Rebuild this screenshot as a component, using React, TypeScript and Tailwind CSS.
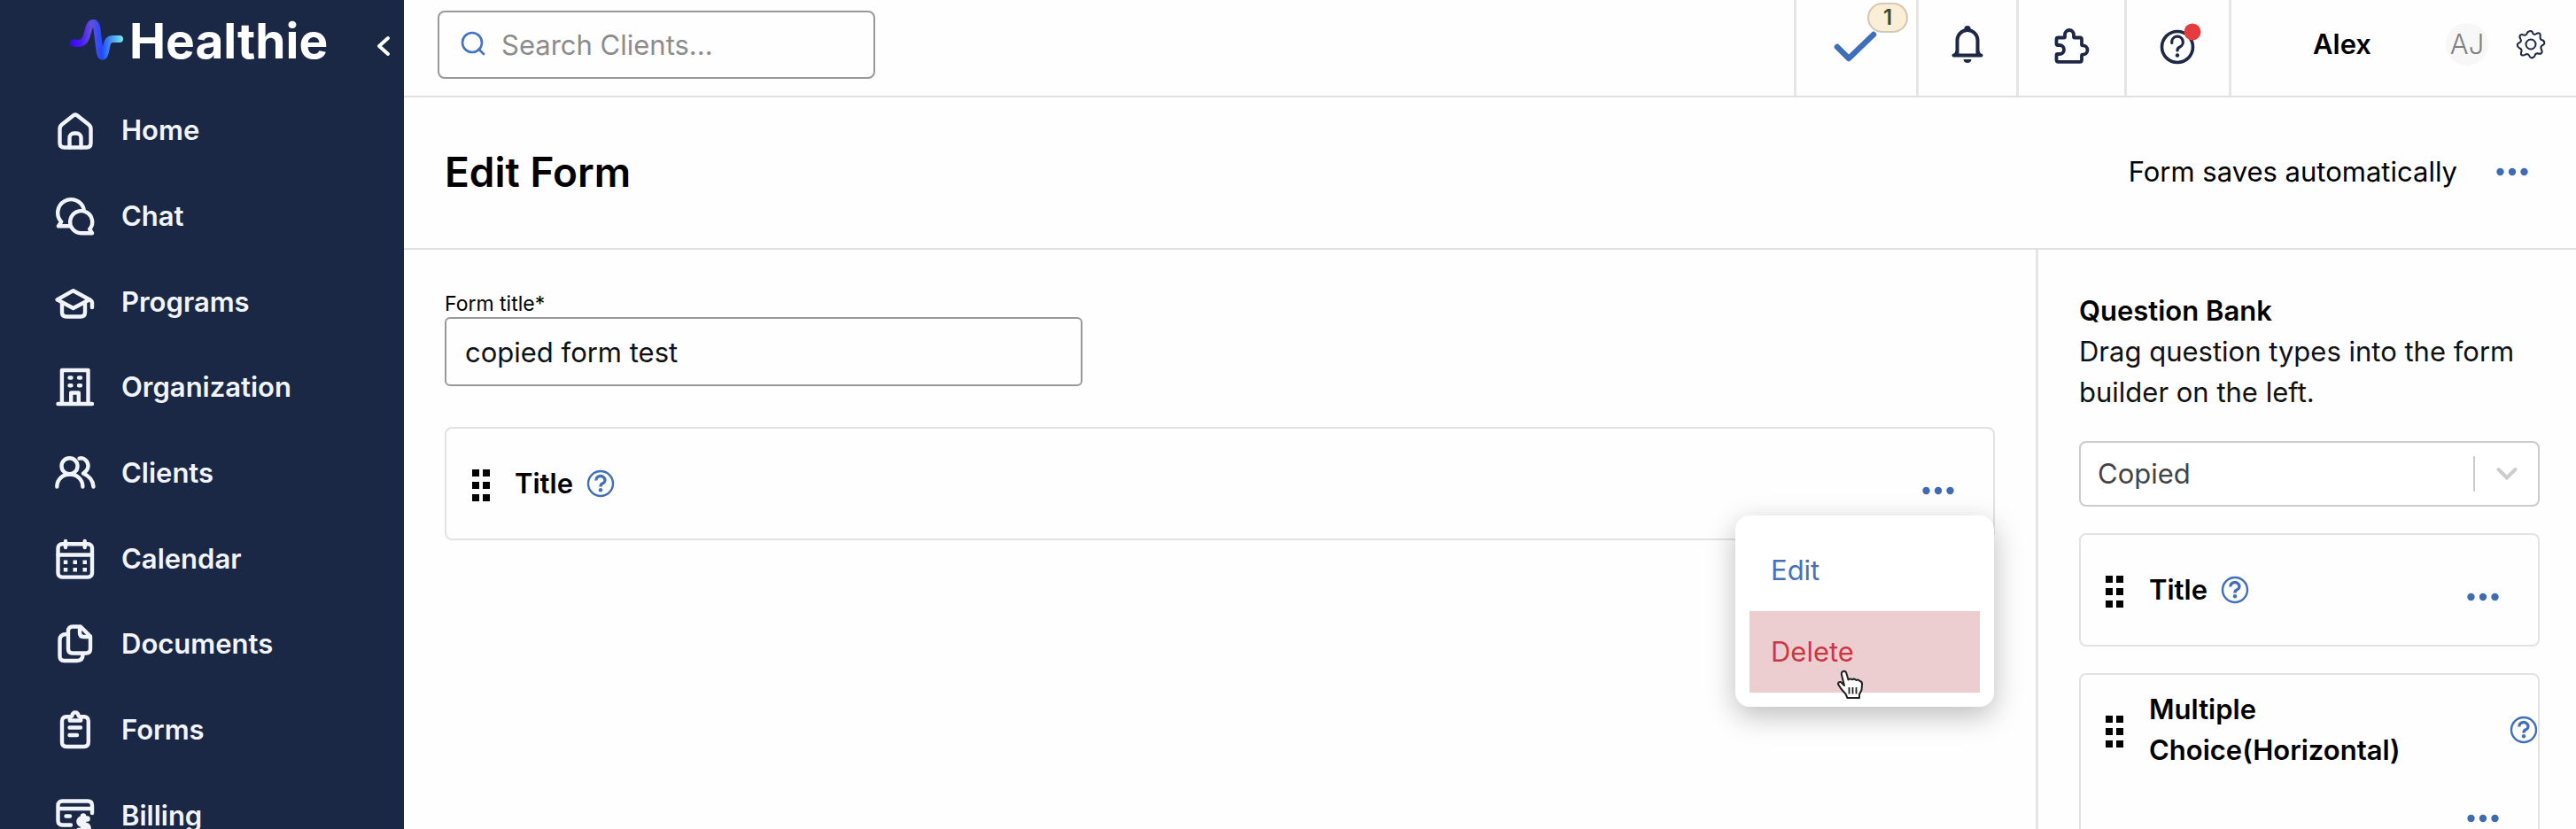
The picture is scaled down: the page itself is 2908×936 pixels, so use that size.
import type { ReactNode } from "react";

type NavItem = {
  label: string;
  icon: ReactNode;
};

const navItems: NavItem[] = [
  {
    label: "Home",
    icon: (
      <>
        <path d="M23 7.2 Q25 5.6 27 7.2 L40 17.5 Q42.5 19.5 42.5 22.5 V38.5 Q42.5 43.5 37.5 43.5 H12.5 Q7.5 43.5 7.5 38.5 V22.5 Q7.5 19.5 10 17.5 Z" />
        <path d="M18.5 43.5 V32.5 a5 5 0 0 1 5 -5 h3 a5 5 0 0 1 5 5 V43.5" />
      </>
    ),
  },
  {
    label: "Chat",
    icon: (
      <>
        <path d="M34.6 16 A15 15 0 1 0 9.2 30.4 L6 35.3 H19" />
        <path d="M41.2 38.8 A12.5 12.5 0 1 0 31.7 43.2 H44 Z" />
      </>
    ),
  },
  {
    label: "Programs",
    icon: (
      <>
        <path d="M22.7 11.2 L41 21.3 L22.7 31 L4.5 21.3 Z" />
        <path d="M41 21.3 Q44 22.8 44 25 V30" />
        <path d="M10 25.5 V35.5 q0 5 5 5 h16 q5 0 5 -5 V25.5" />
      </>
    ),
  },
  {
    label: "Organization",
    icon: (
      <>
        <path d="M9.9 43 V5 H39.5 V43 M5.5 43 H44 M20.2 43 V30.5 H28.8 V43" />
        <path d="M18.5 13.5 h2 M29 13.5 h2 M18.5 22.2 h2 M29 22.2 h2" />
      </>
    ),
  },
  {
    label: "Clients",
    icon: (
      <>
        <circle cx="18.5" cy="16.2" r="9" />
        <path d="M4.3 39.5 C4.3 31 11 25.5 18.8 25.5 S33.4 31 33.4 39.5" />
        <path d="M29.5 7.6 C35 6 39.5 11 39.5 16 C39.5 20 37 22.5 34 24.5 C41 27.5 45 33 45.5 39.5" />
      </>
    ),
  },
  {
    label: "Calendar",
    icon: (
      <>
        <rect x="5.5" y="7.3" width="38.5" height="37.3" rx="4.5" />
        <path d="M5.5 19.5 H44 M14 4 V11 M35.7 4 V11" />
        <path
          d="M14 27.8 h.1 M24.7 27.8 h.1 M35.7 27.8 h.1 M14 36.3 h.1 M24.7 36.3 h.1 M35.7 36.3 h.1"
          strokeLinecap="square"
        />
      </>
    ),
  },
  {
    label: "Documents",
    icon: (
      <>
        <path d="M31 4.5 H22 q-5 0 -5 5 V29.5 q0 5 5 5 H37 q5 0 5 -5 V15.5 Z" />
        <path d="M30 6 V11.5 q0 4.5 4.5 4.5 H41" />
        <path d="M15.5 13 Q7.5 13 7.5 19.5 V38 q0 5 5 5 H27 q6.5 0 6.5 -7" />
      </>
    ),
  },
  {
    label: "Forms",
    icon: (
      <>
        <path d="M18 9.3 H15 q-5 0 -5 5 V38 q0 5 5 5 H34.8 q5 0 5 -5 V14.3 q0 -5 -5 -5 H32" />
        <path d="M18.8 13.5 V11 q0 -2 2.4 -2.4 Q22 4.4 25 4.4 T28.8 8.6 q2.4 .4 2.4 2.4 V13.5 Z" />
        <path d="M18.5 21.5 H31 M18.5 30 H27" />
      </>
    ),
  },
  {
    label: "Billing",
    icon: (
      <>
        <path d="M20 34.5 H10.5 q-5 0 -5 -5 V12.5 q0 -5 5 -5 H39 q5 0 5 5 V21 M5.5 16 H44 M14.5 24.5 H19" />
        <path
          d="M38.5 27.5 H33 a3 3 0 0 0 -1 6 l5 1.5 a3 3 0 0 1 -1 6 H29 M34 24.5 V45"
          strokeWidth="6.5"
        />
      </>
    ),
  },
];

function Logo() {
  return (
    <a href="#" className="flex items-center gap-1.5 text-white">
      <svg width="62" height="50" viewBox="78 22 62 50" fill="none" aria-hidden="true">
        <defs>
          <linearGradient id="pulse" x1="80" y1="0" x2="138" y2="0" gradientUnits="userSpaceOnUse">
            <stop offset="0" stopColor="#3a06f2" />
            <stop offset="0.2" stopColor="#4a1cf0" />
            <stop offset="0.4" stopColor="#6450dc" />
            <stop offset="0.6" stopColor="#1f49ff" />
            <stop offset="0.75" stopColor="#3f86f0" />
            <stop offset="1" stopColor="#78e6e8" />
          </linearGradient>
        </defs>
        <path
          d="M83 49.5 C96 52 97 45 100 34 C102 25 108 24 109.5 34 L112.5 58 C113.5 67 118 67 119.5 57 C121 48 122 45 128 45 H135"
          stroke="url(#pulse)"
          strokeWidth="8"
          strokeLinecap="round"
          strokeLinejoin="round"
        />
      </svg>
      <span className="text-[55px] leading-[60px] font-bold">Healthie</span>
    </a>
  );
}

function Sidebar() {
  return (
    <aside className="w-[456px] shrink-0 bg-[#1a2846]">
      <div className="flex h-[99px] items-start justify-between pt-4 pr-3 pl-[78px]">
        <Logo />
        <button type="button" aria-label="Collapse menu" className="mt-5">
          <svg width="20" height="32" viewBox="0 0 20 32" fill="none" stroke="#fff" strokeWidth="4">
            <path d="M14 7 L4 16 L14 25" strokeLinecap="round" strokeLinejoin="round" />
          </svg>
        </button>
      </div>
      <nav className="grid h-[870px] auto-rows-fr">
        {navItems.map((item) => (
          <a
            key={item.label}
            href="#"
            className="flex items-center gap-[29px] pl-[60px] text-[31px] leading-[46px] font-semibold text-[#f1f4fb]"
          >
            <svg
              width="48"
              height="48"
              viewBox="0 0 48 48"
              fill="none"
              stroke="currentColor"
              strokeWidth="4.4"
              strokeLinecap="round"
              strokeLinejoin="round"
              aria-hidden="true"
            >
              {item.icon}
            </svg>
            {item.label}
          </a>
        ))}
      </nav>
    </aside>
  );
}

function TopBar() {
  return (
    <header className="flex h-[110px] shrink-0 justify-between border-b-2 border-[#e0e0e0]">
      <label
        htmlFor="client-search"
        className="mt-3 ml-[38px] flex h-[77px] w-[494px] items-center rounded-lg border-2 border-[#999] pl-6"
      >
        <svg
          width="28"
          height="28"
          viewBox="0 0 28 28"
          fill="none"
          stroke="#4472c4"
          strokeWidth="2.6"
          className="mb-1 shrink-0"
          aria-hidden="true"
        >
          <circle cx="13" cy="13" r="11" />
          <path d="M20.5 20.5 L26 26" strokeLinecap="round" />
        </svg>
        <input
          id="client-search"
          type="text"
          aria-label="Search clients"
          placeholder="Search Clients..."
          className="h-full w-full bg-transparent pl-[18px] text-[31px] outline-none placeholder:text-[#8c8c8c]"
        />
      </label>

      <div className="flex text-[#1e2746]">
        <button
          type="button"
          aria-label="Tasks"
          className="relative w-[138px] border-l-3 border-[#e5e5e5] pl-10"
        >
          <svg width="54" height="42" viewBox="0 0 54 42" fill="none" stroke="#3f6fbb" strokeWidth="6.5">
            <path d="M6 20 L19 33 L47 6" strokeLinecap="round" strokeLinejoin="round" />
          </svg>
          <span className="absolute top-[3px] right-[9px] flex h-[34px] w-[46px] items-center justify-center rounded-full border-2 border-[#d3c9b4] bg-[#fbeed6] text-2xl font-semibold text-[#4d4420]">
            1
          </span>
        </button>
        <button
          type="button"
          aria-label="Notifications"
          className="flex w-[113px] items-center justify-center border-l-3 border-[#e5e5e5] pb-2"
        >
          <svg width="36" height="44" viewBox="0 0 36 44" fill="none" stroke="currentColor" strokeWidth="4">
            <path d="M6.5 34 V17.5 A11.5 11.5 0 0 1 29.5 17.5 V34" />
            <path d="M2.5 34.5 H33.5" strokeLinecap="round" />
            <path d="M4 34 L7 28 M32 34 L29 28" strokeWidth="3" />
            <circle cx="18" cy="4.5" r="3.6" fill="currentColor" stroke="none" />
            <path d="M13.5 39 H22.5 Q22 43 18 43 T13.5 39 Z" fill="currentColor" stroke="none" />
          </svg>
        </button>
        <button
          type="button"
          aria-label="Integrations"
          className="flex w-[122px] items-center justify-center border-l-3 border-[#e5e5e5] pb-1"
        >
          <svg
            width="42"
            height="42"
            viewBox="0 0 42 42"
            fill="none"
            stroke="currentColor"
            strokeWidth="3.8"
            strokeLinejoin="round"
          >
            <path d="M5.5 11.5 H12 Q13 11.5 13 10.5 V8.5 A5 5.5 0 0 1 23 8.5 V10.5 Q23 11.5 24 11.5 H30 Q32 11.5 32 13.5 V19 Q32 20.3 33.3 20.3 A5.2 5.2 0 0 1 33.3 30.7 Q32 30.7 32 32 V36.5 Q32 38.8 30 38.8 H5.5 Q3.5 38.8 3.5 36.5 V31.5 Q3.5 30 5 30 H7 A5 5 0 0 0 7 20 H5 Q3.5 20 3.5 18.5 V13.5 Q3.5 11.5 5.5 11.5 Z" />
          </svg>
        </button>
        <button
          type="button"
          aria-label="Help"
          className="flex w-[118px] items-center justify-center border-l-3 border-[#e5e5e5] pb-1 pl-1"
        >
          <svg width="48" height="52" viewBox="0 0 48 52" fill="none" stroke="currentColor" aria-hidden="true">
            <circle cx="21" cy="27" r="17.5" strokeWidth="3.6" />
            <path
              d="M14.8 22.5 A6.3 6.3 0 1 1 23.5 27.2 Q21 28.2 21 31"
              strokeWidth="3.2"
              strokeLinecap="round"
            />
            <circle cx="21" cy="36.5" r="2.2" fill="currentColor" stroke="none" />
            <circle cx="38" cy="10" r="9.5" fill="#e33d3f" stroke="none" />
          </svg>
        </button>
        <div className="flex items-center border-l-3 border-[#e5e5e5] pr-[34px] pb-2 pl-[92px]">
          <span className="text-[31px] leading-[46px] font-semibold text-black">Alex</span>
          <span className="ml-[84px] flex size-12 items-center justify-center rounded-full bg-[#f7f7f7] text-[31px] leading-[46px] font-light text-[#808080]">
            AJ
          </span>
          <button type="button" aria-label="Settings" className="ml-[31px]">
            <svg
              width="34"
              height="34"
              viewBox="0 0 34 34"
              fill="none"
              stroke="currentColor"
              strokeWidth="2"
              strokeLinejoin="round"
            >
              <path d="M17 2 Q18.5 2 19.2 4.5 Q20.5 7 23.5 5 Q26.5 3.5 27.5 5.5 Q28 7 27.5 9 Q27.5 12 30.5 12.5 Q32.5 13.5 32.3 16 Q32 17.5 29.5 18.5 Q27.5 20.5 29 23 Q30.5 26 28.5 27.5 Q27 28 25 27.2 Q22 27 21.5 29.8 Q20.5 32.3 17.5 32.3 Q16 32 15 29.5 Q13.5 27 10.5 28.8 Q7.5 30.3 6 28.5 Q5.5 27 6.5 25 Q7 22 4 21.2 Q1.7 20 1.7 17.5 Q2 16 4.5 15 Q7 13.5 5.3 11 Q3.5 8 5.5 6.3 Q7 5.5 9 6.5 Q12 7.3 12.8 4.2 Q14 2 17 2 Z" />
              <circle cx="17" cy="17" r="5.5" />
            </svg>
          </button>
        </div>
      </div>
    </header>
  );
}

function MoreButton({ label }: { label: string }) {
  return (
    <button type="button" aria-label={label} className="text-[#3f6bb3]">
      <svg width="36" height="12" viewBox="0 0 36 12" fill="currentColor" aria-hidden="true">
        <circle cx="4.5" cy="6" r="4.2" />
        <circle cx="18" cy="6" r="4.2" />
        <circle cx="31.5" cy="6" r="4.2" />
      </svg>
    </button>
  );
}

function GripIcon() {
  return (
    <svg width="20" height="36" viewBox="0 0 20 36" className="mt-1 shrink-0" aria-hidden="true">
      <path d="M0 0h8v8H0z M12 0h8v8h-8z M0 14h8v8H0z M12 14h8v8h-8z M0 28h8v8H0z M12 28h8v8h-8z" />
    </svg>
  );
}

function HelpIcon() {
  return (
    <svg width="32" height="32" viewBox="0 0 32 32" fill="none" stroke="#416fb8" className="shrink-0" aria-hidden="true">
      <circle cx="16" cy="16" r="14" strokeWidth="2.4" />
      <path d="M11 12.5 A5 4.4 0 1 1 18 16 Q16 17 16 19.5" strokeWidth="3.4" />
      <circle cx="16" cy="23.3" r="2.2" fill="#416fb8" stroke="none" />
    </svg>
  );
}

function HandCursor() {
  return (
    <svg
      width="32"
      height="34"
      viewBox="0 0 32 34"
      className="pointer-events-none absolute top-[174px] left-[114px]"
      aria-hidden="true"
    >
      <path
        d="M7.5 2 C9.5 1 11 2.5 11.5 4.5 L13.5 11.5 Q15.5 9.5 17.8 11.3 Q20.5 9.7 22.3 12 Q25 10.8 26.5 13 Q29.5 13.5 29 17 L28.5 23 L26 28 V32 H12.5 L10.5 27.5 Q5 22 2 16.5 Q2 13.5 5 14 L9 18 L6 6 Q5.3 3 7.5 2 Z"
        fill="#fff"
        stroke="#222"
        strokeWidth="2"
        strokeLinejoin="round"
      />
      <path d="M14.5 20 V27.5 M18.5 20 V27.5 M22.5 20 V27.5" stroke="#222" strokeWidth="1.8" />
    </svg>
  );
}

function FormBuilder() {
  return (
    <section className="flex-1 px-[46px] pt-[46px]">
      <label htmlFor="form-title" className="block text-[23px] leading-[30px]">
        Form title*
      </label>
      <input
        id="form-title"
        type="text"
        defaultValue="copied form test"
        className="block h-[78px] w-[720px] rounded-md border-2 border-[#999] px-[21px] text-[31px] leading-[46px] text-[#111] outline-none"
      />

      <div className="relative mt-[46px] flex h-32 items-center justify-between rounded-lg border-2 border-[#e2e2e2] pr-11 pl-[29px]">
        <div className="flex items-center">
          <GripIcon />
          <span className="ml-7 text-[31px] leading-[46px] font-semibold">Title</span>
          <button type="button" aria-label="About Title" className="ml-[15px]">
            <HelpIcon />
          </button>
        </div>
        <div className="flex pt-4">
          <MoreButton label="Title options" />
        </div>

        <div
          role="menu"
          className="absolute top-[98px] -right-px w-[292px] rounded-2xl bg-white p-4 text-[31px] leading-[46px] shadow-[0_10px_32px_rgba(0,0,0,0.26)]"
        >
          <button
            type="button"
            role="menuitem"
            className="block h-[92px] w-full px-6 text-left text-[#4a70b4]"
          >
            Edit
          </button>
          <button
            type="button"
            role="menuitem"
            className="block h-[92px] w-full bg-[#edced0] px-6 text-left text-[#cb3744]"
          >
            Delete
          </button>
          <HandCursor />
        </div>
      </div>
    </section>
  );
}

function QuestionBank() {
  return (
    <aside className="w-[610px] shrink-0 border-l-3 border-[#e5e5e5] pt-[46px] pr-[41px] pl-[46px] text-[31px] leading-[46px]">
      <h2 className="font-semibold">Question Bank</h2>
      <p className="text-[#111]">Drag question types into the form builder on the left.</p>

      <div className="relative mt-8">
        <select
          aria-label="Question type"
          className="block h-[74px] w-full appearance-none rounded-lg border-2 border-[#ccc] bg-white px-[19px] text-[#444] outline-none"
        >
          <option>Copied</option>
        </select>
        <div className="pointer-events-none absolute inset-y-0 right-[25px] flex items-center gap-6 text-[#ccc]">
          <span className="h-10 w-0.5 bg-current" />
          <svg width="24" height="16" viewBox="0 0 24 16" fill="none" stroke="currentColor" strokeWidth="4">
            <path d="M2.5 3 L12 12.5 L21.5 3" strokeLinecap="round" />
          </svg>
        </div>
      </div>

      <div className="mt-[30px] flex h-32 items-center justify-between rounded-lg border-2 border-[#e2e2e2] pr-11 pl-7">
        <div className="flex items-center">
          <GripIcon />
          <span className="ml-[29px] font-semibold">Title</span>
          <button type="button" aria-label="About Title" className="ml-[15px]">
            <HelpIcon />
          </button>
        </div>
        <div className="flex pt-4">
          <MoreButton label="Title options" />
        </div>
      </div>

      <div className="mt-[30px] h-[200px] rounded-lg border-2 border-[#e2e2e2] pt-4 pl-7">
        <div className="flex items-center">
          <GripIcon />
          <span className="ml-[29px] flex-1 font-semibold">
            Multiple
            <br />
            Choice(Horizontal)
          </span>
          <button type="button" aria-label="About Multiple Choice(Horizontal)">
            <HelpIcon />
          </button>
        </div>
        <div className="mt-12 flex justify-end pr-11">
          <MoreButton label="Multiple Choice(Horizontal) options" />
        </div>
      </div>
    </aside>
  );
}

export default function App() {
  return (
    <div className="flex h-screen overflow-hidden bg-[#fefefe] font-[Inter,sans-serif] text-black">
      <Sidebar />
      <main className="flex min-w-0 flex-1 flex-col">
        <TopBar />
        <div className="flex h-[172px] shrink-0 items-center justify-between border-b-2 border-[#e0e0e0] pr-[54px] pb-0.5 pl-[46px]">
          <h1 className="text-[46px] leading-[60px] font-semibold">Edit Form</h1>
          <div className="flex items-center gap-11 text-[31px] leading-[46px]">
            <span>Form saves automatically</span>
            <MoreButton label="Form options" />
          </div>
        </div>
        <div className="flex flex-1">
          <FormBuilder />
          <QuestionBank />
        </div>
      </main>
    </div>
  );
}
